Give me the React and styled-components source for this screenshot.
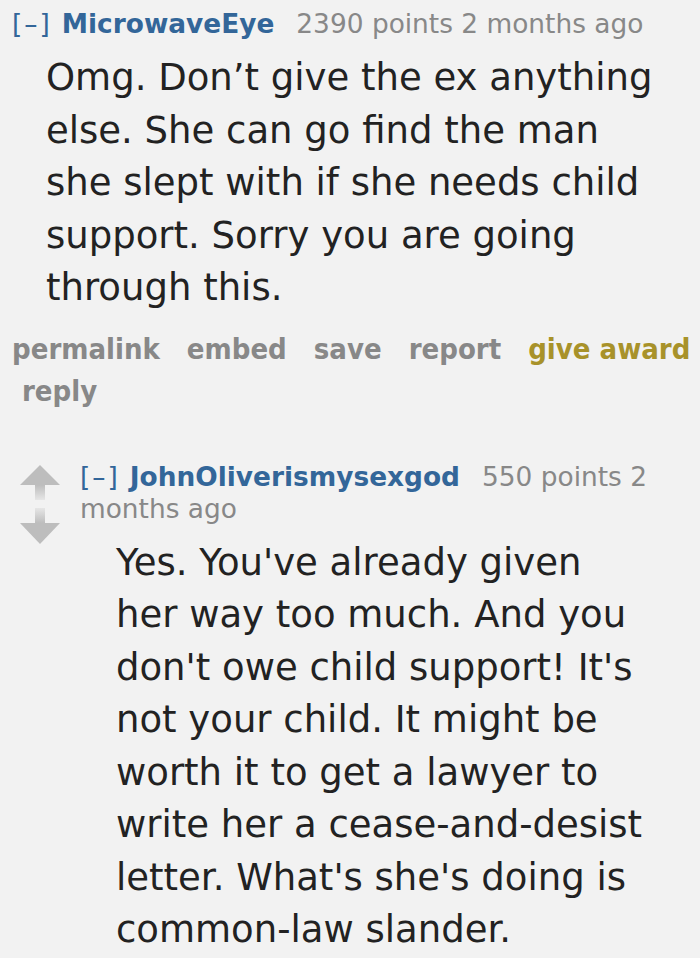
import React from 'react';
import styled, { createGlobalStyle } from 'styled-components';

const GlobalStyle = createGlobalStyle`
  html, body {
    margin: 0;
    padding: 0;
    background: #f2f2f2;
  }
  body {
    font-family: "DejaVu Sans", Verdana, sans-serif;
  }
`;

const Thread = styled.div`
  width: 700px;
  padding: 8px 0 0 12px;
  box-sizing: border-box;
`;

const Comment = styled.div`
  display: flex;
  align-items: flex-start;
`;

const Entry = styled.div`
  flex: 1;
  min-width: 0;
`;

const Tagline = styled.div`
  font-size: 26.4px;
  line-height: 32px;
  color: #888;
  max-width: ${p => p.$width || 700}px;
`;

const Expand = styled.span`
  color: #369;
  letter-spacing: 2px;
  margin-right: 10px;
`;

const Author = styled.span`
  color: #369;
  font-weight: bold;
  margin-right: 22px;
`;

const Body = styled.div`
  padding-left: ${p => p.$indent}px;
  padding-right: ${p => p.$right || 0}px;
  margin-top: 12px;
  font-size: 37px;
  line-height: 52.5px;
  color: #222;
`;

const Buttons = styled.ul`
  list-style: none;
  margin: 13px 0 0;
  padding: 0;
  display: flex;
  flex-wrap: wrap;
  column-gap: 27px;
  font-family: "DejaVu Sans Condensed", "DejaVu Sans", sans-serif;
  font-weight: bold;
  font-size: 29px;
  line-height: 42px;
`;

const Button = styled.li`
  color: ${p => (p.$gold ? '#a8922a' : '#888')};
  padding-left: ${p => (p.$pad ? 10 : 0)}px;
`;

const Child = styled.div`
  margin-top: 49px;
  padding-left: 8px;
`;

const Votes = styled.div`
  width: 40px;
  flex: none;
  margin-top: 4px;
  margin-right: 20px;
  display: flex;
  flex-direction: column;
  gap: 7px;
`;

const Arrow = ({ down }) => {
  const id = down ? 'shaftDown' : 'shaftUp';
  return (
    <svg width="40" height="36" viewBox="0 0 40 36">
      <defs>
        <linearGradient id={id} x1="0" y1={down ? 1 : 0} x2="0" y2={down ? 0 : 1}>
          <stop offset="0" stopColor="#bdbdbd" />
          <stop offset="1" stopColor="#e6e6e6" />
        </linearGradient>
      </defs>
      {down ? (
        <g>
          <rect x="15" y="0" width="10" height="15" fill={`url(#${id})`} />
          <path d="M0 15 L40 15 L20 36 Z" fill="#bdbdbd" />
        </g>
      ) : (
        <g>
          <path d="M20 0 L40 20 L0 20 Z" fill="#bdbdbd" />
          <rect x="15" y="20" width="10" height="15" fill={`url(#${id})`} />
        </g>
      )}
    </svg>
  );
};

export default function App() {
  return (
    <>
      <GlobalStyle />
      <Thread>
        <Comment>
          <Entry>
            <Tagline>
              <Expand>[–]</Expand>
              <Author>MicrowaveEye</Author>
              2390 points 2 months ago
            </Tagline>
            <Body $indent={34} $right={40}>
              Omg. Don’t give the ex anything else. She can go find the man she slept with if she needs child support. Sorry you are going through this.
            </Body>
            <Buttons>
              <Button>permalink</Button>
              <Button>embed</Button>
              <Button>save</Button>
              <Button>report</Button>
              <Button $gold>give award</Button>
              <Button $pad>reply</Button>
            </Buttons>
          </Entry>
        </Comment>
        <Child>
          <Comment>
            <Votes>
              <Arrow />
              <Arrow down />
            </Votes>
            <Entry>
              <Tagline $width={580}>
                <Expand>[–]</Expand>
                <Author>JohnOliverismysexgod</Author>
                550 points 2 months ago
              </Tagline>
              <Body $indent={36} $right={48}>
                Yes. You've already given her way too much. And you don't owe child support! It's not your child. It might be worth it to get a lawyer to write her a cease-and-desist letter. What's she's doing is common-law slander.
              </Body>
            </Entry>
          </Comment>
        </Child>
      </Thread>
    </>
  );
}
